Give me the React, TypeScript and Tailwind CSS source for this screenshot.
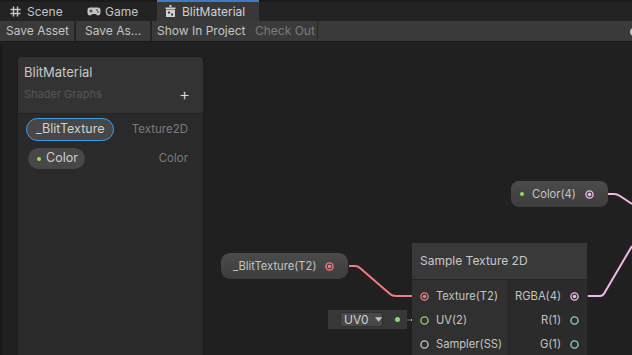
import React from "react";

const font = { fontFamily: "Inter, 'Noto Sans', sans-serif" };

function HashIcon() {
  return (
    <svg width="11" height="11" viewBox="0 0 11 11" className="shrink-0">
      <path d="M3.5 0.5V10.5M7.5 0.5V10.5M0.5 3.5H10.5M0.5 7.5H10.5" stroke="#c4c4c4" strokeWidth="1.4" fill="none" />
    </svg>
  );
}

function GamepadIcon() {
  return (
    <svg width="14" height="9" viewBox="0 0 14 9" className="shrink-0">
      <path d="M3 0.5H11C12.6 0.5 13.5 1.6 13.5 3.2V5.5C13.5 7.3 12.4 8.5 11 8.5C9.8 8.5 9.3 7.2 8.5 7H5.5C4.7 7.2 4.2 8.5 3 8.5C1.6 8.5 0.5 7.3 0.5 5.5V3.2C0.5 1.6 1.4 0.5 3 0.5Z" fill="#c4c4c4" />
      <rect x="2.5" y="3.5" width="3" height="1" fill="#2a2a2a" />
      <rect x="3.5" y="2.5" width="1" height="3" fill="#2a2a2a" />
      <circle cx="10" cy="3" r="0.8" fill="#2a2a2a" />
      <circle cx="11" cy="5" r="0.8" fill="#2a2a2a" />
    </svg>
  );
}

function ShaderIcon() {
  return (
    <svg width="11" height="13" viewBox="0 0 11 13" className="shrink-0">
      <rect x="4.5" y="0" width="2" height="2" fill="#d0d0d0" />
      <rect x="0.5" y="2.5" width="10" height="1.5" fill="#d0d0d0" />
      <rect x="1" y="4.5" width="9" height="7.5" fill="#d0d0d0" />
      <rect x="3" y="6.5" width="2" height="2" fill="#383838" />
      <rect x="6" y="8.5" width="2" height="2" fill="#383838" />
    </svg>
  );
}

function Port({ color, filled, size = 9 }: { color: string; filled?: boolean; size?: number }) {
  return (
    <svg width={size} height={size} viewBox="0 0 10 10" className="shrink-0">
      <circle cx="5" cy="5" r="4" stroke={color} strokeWidth="1.5" fill="none" />
      {filled && <circle cx="5" cy="5" r="2" fill={color} />}
    </svg>
  );
}

export default function App() {
  return (
    <div className="w-[632px] h-[355px] overflow-hidden bg-[#202020] flex flex-col text-[12px] text-[#c4c4c4] whitespace-nowrap" style={font}>
      {/* Tab bar */}
      <div className="h-[21px] bg-[#232323] border-t-[2px] border-[#1b1b1b] flex items-end shrink-0">
        <div className="h-[19px] w-[78px] flex items-center gap-[6px] pl-[10px]">
          <HashIcon />
          <span className="leading-none">Scene</span>
        </div>
        <div className="h-[19px] w-[79px] flex items-center gap-[4px] pl-[9px]">
          <GamepadIcon />
          <span className="leading-none">Game</span>
        </div>
        <div className="h-[21px] -mt-[2px] w-[102px] bg-[#383838] border-t-[2px] border-[#3d7bc4] flex items-center gap-[6px] pl-[8px]">
          <ShaderIcon />
          <span className="leading-none text-[#d2d2d2]">BlitMaterial</span>
        </div>
      </div>
      {/* Toolbar */}
      <div className="h-[21px] bg-[#3a3a3a] flex items-center shrink-0 border-b border-[#1a1a1a] relative">
        <div className="h-full flex items-center px-[6px] w-[74px] shrink-0">Save Asset</div>
        <div className="w-[2px] h-full bg-[#252525] shrink-0" />
        <div className="h-full flex items-center pl-[9px] w-[74px] shrink-0">Save As...</div>
        <div className="w-[2px] h-full bg-[#252525] shrink-0" />
        <div className="h-full flex items-center pl-[5px] w-[98px] shrink-0">Show In Project</div>
        <div className="h-full flex items-center pl-[5px] w-[67px] shrink-0 text-[#7a7a7a]">Check Out</div>
        <div className="w-[1px] h-full bg-[#2a2a2a] shrink-0" />
        <div className="absolute right-[-6px] top-[7px] w-[8px] h-[8px] rounded-full bg-[#c4c4c4]" />
      </div>
      {/* Graph */}
      <div className="relative flex-1 bg-[#202020] border-l-[2px] border-[#1a1a1a]">
        {/* Blackboard */}
        <div className="absolute left-[15px] top-[14px] w-[187px] h-[320px] rounded-t-[5px] bg-[#2a2a2a] border border-[#1c1c1c] flex flex-col overflow-hidden">
          <div className="h-[57px] bg-[#333333] border-b border-[#232323] flex flex-col px-[6px] pt-[6px]">
            <div className="text-[13px] text-[#c8c8c8] leading-[18px]">BlitMaterial</div>
            <div className="flex items-center justify-between mt-[5px]">
              <span className="text-[11px] text-[#575757]">Shader Graphs</span>
              <span className="text-[17px] leading-none text-[#e0e0e0] mr-[7px] font-light">+</span>
            </div>
          </div>
          <div className="flex flex-col px-[8px] pt-[4px] gap-[7px]">
            <div className="flex items-center justify-between">
              <div className="h-[23px] w-[88px] rounded-full bg-[#474747] border border-[#3d9ee8] flex items-center pl-[9px] text-[#d0d0d0] text-[12.5px]">_BlitTexture</div>
              <span className="text-[#7c7c7c] text-[11.5px] mr-[7px]">Texture2D</span>
            </div>
            <div className="flex items-center justify-between">
              <div className="ml-[2px] h-[21px] w-[57px] rounded-full bg-[#474747] flex items-center pl-[9px] gap-[5px] text-[#d0d0d0] text-[12.5px]">
                <span className="w-[4px] h-[4px] rounded-full bg-[#8ce060]" />
                Color
              </div>
              <span className="text-[#7c7c7c] text-[11.5px] mr-[7px]">Color</span>
            </div>
          </div>
        </div>

        {/* Wires */}
        <svg className="absolute left-[-2px] top-0" width="632" height="313" viewBox="0 42 632 313">
          <path d="M349 266 H355 Q358 266 360 268 L390 294 Q392 296 396 296 H412" stroke="#f27c7c" strokeWidth="2" fill="none" />
          <path d="M412 296 H420" stroke="#6a4848" strokeWidth="2" fill="none" />
          <path d="M404 320 H411" stroke="#4a4a4a" strokeWidth="2" fill="none" />
          <path d="M411 320 H421" stroke="#86d870" strokeWidth="2" fill="none" />
          <path d="M608 194 H614 Q617 194 620 196 L632 204" stroke="#f0b8ea" strokeWidth="2" fill="none" />
          <path d="M580 296 H588" stroke="#5a4858" strokeWidth="2" fill="none" />
          <path d="M588 296 H600 Q603 296 605 292 L632 246" stroke="#f0b8ea" strokeWidth="2" fill="none" />
        </svg>

        {/* Color(4) node */}
        <div className="absolute left-[509px] top-[139px] w-[97px] h-[26px] rounded-[8px] bg-gradient-to-b from-[#4b4b4b] to-[#3d3d3d] flex items-center pl-[9px] text-[#c4c4c4] text-[11.2px]">
          <span className="w-[4px] h-[4px] rounded-full bg-[#8ce060]" />
          <span className="ml-[8px]">Color(4)</span>
          <span className="ml-[9px]"><Port color="#f0b8ea" filled /></span>
        </div>

        {/* _BlitTexture(T2) node */}
        <div className="absolute left-[219px] top-[211px] w-[127px] h-[26px] rounded-[9px] bg-gradient-to-b from-[#4b4b4b] to-[#3d3d3d] flex items-center pl-[12px] text-[#c4c4c4] text-[11.2px]">
          <span>_BlitTexture(T2)</span>
          <span className="ml-[9px]"><Port color="#f27c7c" filled /></span>
        </div>

        {/* UV0 */}
        <div className="absolute left-[326px] top-[268px] w-[79px] h-[19px] bg-[#383838] flex items-center">
          <div className="ml-[12px] w-[43px] h-[15px] rounded-[2px] bg-[#484848] border border-[#2e2e2e] flex items-center pl-[3px] gap-[6px] text-[12px] text-[#d0d0d0]">
            <span className="leading-none">UV0</span>
            <svg width="8" height="5" viewBox="0 0 8 5"><path d="M0 0H8L4 5Z" fill="#c4c4c4" /></svg>
          </div>
          <span className="ml-[12px] w-[5px] h-[5px] rounded-full bg-[#86d870]" />
        </div>

        {/* Sample Texture 2D */}
        <div className="absolute left-[410px] top-[201px] w-[175px] h-[130px] bg-[#2b2b2b] flex flex-col">
          <div className="h-[37px] bg-[#393939] border-b border-[#232323] flex items-center pl-[8px] text-[12px] text-[#c8c8c8]">Sample Texture 2D</div>
          <div className="flex flex-1 text-[11.2px]">
            <div className="w-[97px] bg-[#303030] border-r border-[#242424] flex flex-col pt-[8px] gap-[8px]">
              <div className="h-[16px] flex items-center pl-[8px] gap-[7px]"><Port color="#f27c7c" filled /><span>Texture(T2)</span></div>
              <div className="h-[16px] flex items-center pl-[8px] gap-[7px]"><Port color="#86d870" /><span>UV(2)</span></div>
              <div className="h-[16px] flex items-center pl-[8px] gap-[7px]"><Port color="#c4c4c4" /><span>Sampler(SS)</span></div>
            </div>
            <div className="flex-1 flex flex-col pt-[8px] gap-[8px] items-end">
              <div className="h-[16px] flex items-center pr-[8px] gap-[9px]"><span>RGBA(4)</span><Port color="#f0b8ea" filled /></div>
              <div className="h-[16px] flex items-center pr-[8px] gap-[9px]"><span>R(1)</span><Port color="#78d8d8" /></div>
              <div className="h-[16px] flex items-center pr-[8px] gap-[9px]"><span>G(1)</span><Port color="#78d8d8" /></div>
            </div>
          </div>
        </div>
      </div>
    </div>
  );
}
